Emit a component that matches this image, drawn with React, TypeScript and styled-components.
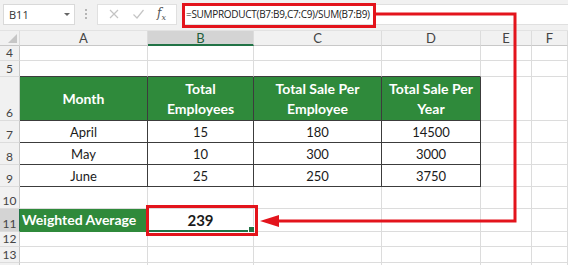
import React from "react";
import styled, { createGlobalStyle } from "styled-components";

const GlobalStyle = createGlobalStyle`
  html, body { margin: 0; padding: 0; background: #ffffff; overflow: hidden; }
  * { box-sizing: border-box; }
`;

const GREEN = "#2f8a3b";
const RED = "#e3141c";
const GRID = "#dcdcdc";
const DARK = "#3c3c3c";
const FONT = `"Lato", "Open Sans", sans-serif`;

const Page = styled.div`
  position: relative;
  width: 568px;
  height: 265px;
  overflow: hidden;
  background: #ffffff;
  font-family: ${FONT};
`;

const FormulaBar = styled.div`
  height: 31px;
  display: flex;
  align-items: center;
  background: #f1f1f1;
  padding: 0 0 2px 3px;
  border-bottom: 1px solid #e2e2e2;
`;

const NameBox = styled.div`
  width: 72px;
  height: 21px;
  background: #ffffff;
  border: 1px solid #d9d9d9;
  display: flex;
  align-items: center;
  justify-content: space-between;
  padding: 0 4px 0 5px;
  font-family: "Open Sans", sans-serif;
  font-size: 11px;
  color: #333;
`;

const Caret = styled.span`
  width: 0;
  height: 0;
  border-left: 3px solid transparent;
  border-right: 3px solid transparent;
  border-top: 3px solid #666;
`;

const Dots = styled.div`
  width: 22px;
  display: flex;
  flex-direction: column;
  align-items: center;
  gap: 2px;
  span {
    width: 2px;
    height: 2px;
    background: #b5b5b5;
  }
`;

const IconBox = styled.div`
  width: 80px;
  height: 21px;
  background: #ffffff;
  border: 1px solid #e0e0e0;
  display: flex;
  align-items: center;
  justify-content: space-around;
  padding: 0 4px;
`;

const Fx = styled.span`
  font-family: "DejaVu Serif", "Liberation Serif", serif;
  font-style: italic;
  font-size: 12px;
  color: #555;
  sub { font-size: 8px; }
`;

const FormulaInput = styled.div`
  flex: 1;
  height: 21px;
  margin-left: 5px;
  background: #ffffff;
  border: 1px solid #e0e0e0;
  border-right: none;
  display: flex;
  align-items: center;
  padding-left: 3px;
  font-family: "Open Sans", sans-serif;
  font-size: 10px;
  letter-spacing: -0.3px;
  color: #222;
  white-space: nowrap;
`;

const Sheet = styled.div`
  display: grid;
  grid-template-columns: 20px 128px 106px 128px 99px 51px 36px;
`;

const Corner = styled.div`
  height: 15px;
  background: #f1f1f1;
  border-right: 1px solid ${GRID};
  border-bottom: 1px solid #c8c8c8;
  position: relative;
  &::after {
    content: "";
    position: absolute;
    right: 2px;
    bottom: 2px;
    width: 0;
    height: 0;
    border-left: 9px solid transparent;
    border-bottom: 9px solid #c6c6c6;
  }
`;

const ColHead = styled.div<{ $active?: boolean }>`
  height: 15px;
  background: ${(p) => (p.$active ? "#d4d4d4" : "#f1f1f1")};
  border-right: 1px solid ${GRID};
  border-bottom: ${(p) => (p.$active ? `2px solid #217346` : `1px solid #c8c8c8`)};
  display: flex;
  align-items: center;
  justify-content: center;
  font-size: 13px;
  color: ${(p) => (p.$active ? "#1f5e3a" : "#444")};
`;

const RowHead = styled.div<{ $h: number; $active?: boolean }>`
  height: ${(p) => p.$h}px;
  background: ${(p) => (p.$active ? "#d4d4d4" : "#f1f1f1")};
  border-right: 1px solid ${(p) => (p.$active ? "#217346" : "#c8c8c8")};
  border-bottom: 1px solid ${GRID};
  display: flex;
  align-items: flex-end;
  justify-content: center;
  font-size: 12px;
  line-height: 14px;
  color: #444;
`;

type CellProps = {
  $h: number;
  $fill?: string;
  $bold?: boolean;
  $light?: boolean;
  $dark?: boolean;
  $darkBottom?: boolean;
  $left?: boolean;
  $size?: number;
};

const Cell = styled.div<CellProps>`
  height: ${(p) => p.$h}px;
  background: ${(p) => p.$fill || "#ffffff"};
  border-right: 1px solid ${(p) => (p.$dark ? DARK : p.$fill ? p.$fill : GRID)};
  border-bottom: 1px solid ${(p) => (p.$dark || p.$darkBottom ? DARK : p.$fill ? p.$fill : GRID)};
  display: flex;
  align-items: center;
  justify-content: ${(p) => (p.$left ? "flex-start" : "center")};
  padding-left: ${(p) => (p.$left ? "2px" : "0")};
  text-align: center;
  font-size: ${(p) => p.$size || 13}px;
  line-height: 20px;
  font-weight: ${(p) => (p.$bold ? 700 : 400)};
  color: ${(p) => (p.$light ? "#ffffff" : "#1a1a1a")};
  white-space: pre-line;
  position: relative;
`;

const SelectLine = styled.div`
  position: absolute;
  left: 0;
  right: 0;
  bottom: -1px;
  height: 2px;
  background: #217346;
  &::after {
    content: "";
    position: absolute;
    right: -2px;
    bottom: -1px;
    width: 5px;
    height: 5px;
    background: #217346;
    border: 1px solid #ffffff;
  }
`;

const RedBox = styled.div<{ $x: number; $y: number; $w: number; $h: number }>`
  position: absolute;
  left: ${(p) => p.$x}px;
  top: ${(p) => p.$y}px;
  width: ${(p) => p.$w}px;
  height: ${(p) => p.$h}px;
  border: 3px solid ${RED};
  pointer-events: none;
`;

const Overlay = styled.svg`
  position: absolute;
  left: 0;
  top: 0;
  pointer-events: none;
`;

type C = {
  text?: string;
  fill?: string;
  bold?: boolean;
  light?: boolean;
  dark?: boolean;
  darkBottom?: boolean;
  left?: boolean;
  size?: number;
  selected?: boolean;
};

type Row = { n: number | ""; h: number; active?: boolean; cells: C[] };

const blank = (): C => ({});
const blanks = (): C[] => [blank(), blank(), blank(), blank(), blank(), blank()];
const head = (t: string): C => ({ text: t, fill: GREEN, bold: true, light: true, dark: true, size: 14 });
const data = (t: string): C => ({ text: t, dark: true });

const rows: Row[] = [
  { n: 4, h: 15, cells: blanks() },
  {
    n: 5,
    h: 16,
    cells: [
      { darkBottom: true },
      { darkBottom: true },
      { darkBottom: true },
      { darkBottom: true },
      blank(),
      blank(),
    ],
  },
  {
    n: 6,
    h: 44,
    cells: [
      head("Month"),
      head("Total\nEmployees"),
      head("Total Sale Per\nEmployee"),
      head("Total Sale Per\nYear"),
      blank(),
      blank(),
    ],
  },
  { n: 7, h: 22, cells: [data("April"), data("15"), data("180"), data("14500"), blank(), blank()] },
  { n: 8, h: 22, cells: [data("May"), data("10"), data("300"), data("3000"), blank(), blank()] },
  { n: 9, h: 22, cells: [data("June"), data("25"), data("250"), data("3750"), blank(), blank()] },
  { n: 10, h: 22, cells: blanks() },
  {
    n: 11,
    h: 23,
    active: true,
    cells: [
      { text: "Weighted Average", fill: GREEN, bold: true, light: true, left: true, size: 14 },
      { text: "239", bold: true, size: 15, selected: true },
      blank(),
      blank(),
      blank(),
      blank(),
    ],
  },
  { n: 12, h: 15, cells: blanks() },
  { n: 13, h: 16, cells: blanks() },
  { n: "", h: 16, cells: blanks() },
];

const cols = ["A", "B", "C", "D", "E", "F"];

export default function App() {
  return (
    <>
      <GlobalStyle />
      <Page>
        <FormulaBar>
          <NameBox>
            <span>B11</span>
            <Caret />
          </NameBox>
          <Dots>
            <span />
            <span />
            <span />
          </Dots>
          <IconBox>
            <svg width="12" height="12" viewBox="0 0 12 12">
              <path d="M2 2 L10 10 M10 2 L2 10" stroke="#c4c4c4" strokeWidth="1.2" fill="none" />
            </svg>
            <svg width="13" height="12" viewBox="0 0 13 12">
              <path d="M1.5 6.5 L5 10 L11.5 2" stroke="#c4c4c4" strokeWidth="1.2" fill="none" />
            </svg>
            <Fx>
              f<sub>x</sub>
            </Fx>
          </IconBox>
          <FormulaInput>=SUMPRODUCT(B7:B9,C7:C9)/SUM(B7:B9)</FormulaInput>
        </FormulaBar>
        <Sheet>
          <Corner />
          {cols.map((c) => (
            <ColHead key={c} $active={c === "B"}>
              {c}
            </ColHead>
          ))}
          {rows.map((r, ri) => (
            <React.Fragment key={ri}>
              <RowHead $h={r.h} $active={r.active}>
                {r.n}
              </RowHead>
              {r.cells.map((c, i) => (
                <Cell
                  key={i}
                  $h={r.h}
                  $fill={c.fill}
                  $bold={c.bold}
                  $light={c.light}
                  $dark={c.dark}
                  $darkBottom={c.darkBottom}
                  $left={c.left}
                  $size={c.size}
                >
                  {c.text}
                  {c.selected && <SelectLine />}
                </Cell>
              ))}
            </React.Fragment>
          ))}
        </Sheet>
        <RedBox $x={182} $y={3} $w={194} $h={25} />
        <RedBox $x={146} $y={205} $w={112} $h={31} />
        <Overlay width="568" height="265" viewBox="0 0 568 265">
          <polyline
            points="376,14 515,14 515,221 276,221"
            fill="none"
            stroke={RED}
            strokeWidth="3"
          />
          <polygon points="260,221 279,215 279,227" fill={RED} />
        </Overlay>
      </Page>
    </>
  );
}
